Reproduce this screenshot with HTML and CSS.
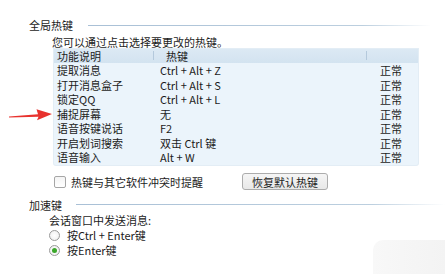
FILE: index.html
```html
<!DOCTYPE html>
<html lang="zh-CN">
<head>
  <meta charset="utf-8">
  <title>热键设置</title>
  <link rel="stylesheet" href="styles.css">
</head>
<body>

  <div class="panel">
    <div class="group-title">
      <span>全局热键</span>
      <span class="rule"></span>
    </div>
    <p class="hint">您可以通过点击选择要更改的热键。</p>

    <div class="hotkeys">
      <div class="row head">
        <span class="c1">功能说明</span>
        <span class="c2">热键</span>
        <span class="c3"></span>
      </div>
      <div class="row"><span class="c1">提取消息</span><span class="c2">Ctrl + Alt + Z</span><span class="c3">正常</span></div>
      <div class="row"><span class="c1">打开消息盒子</span><span class="c2">Ctrl + Alt + S</span><span class="c3">正常</span></div>
      <div class="row"><span class="c1">锁定QQ</span><span class="c2">Ctrl + Alt + L</span><span class="c3">正常</span></div>
      <div class="row"><span class="c1">捕捉屏幕</span><span class="c2">无</span><span class="c3">正常</span></div>
      <div class="row"><span class="c1">语音按键说话</span><span class="c2">F2</span><span class="c3">正常</span></div>
      <div class="row"><span class="c1">开启划词搜索</span><span class="c2">双击 Ctrl 键</span><span class="c3">正常</span></div>
      <div class="row"><span class="c1">语音输入</span><span class="c2">Alt + W</span><span class="c3">正常</span></div>
    </div>

    <div class="options">
      <label class="check"><span class="box"></span>热键与其它软件冲突时提醒</label>
      <button class="btn">恢复默认热键</button>
    </div>

    <div class="group-title second">
      <span>加速键</span>
      <span class="rule"></span>
    </div>
    <p class="hint small">会话窗口中发送消息:</p>
    <label class="radio"><span class="dot"></span>按Ctrl + Enter键</label>
    <label class="radio"><span class="dot on"></span>按Enter键</label>
  </div>

  <!-- red pointer over the screenshot -->
  <svg class="arrow" width="60" height="20" viewBox="0 106 60 20">
    <polygon points="9,116.4 38,114.3 36.5,109.2 52,114 37,120.2 38.5,116.8 9,117.6" fill="#e8322e"/>
  </svg>

  <div class="fade"></div>

</body>
</html>
```

FILE: styles.css
```css
body {
  margin: 0;
  background: #fff;
  font-family: "Noto Sans CJK SC", "Noto Sans", sans-serif;
  font-size: 11px;
  color: #1c1c1c;
  width: 445px;
  height: 274px;
  overflow: hidden;
}
.panel {
  padding-top: 18px;
}
.group-title {
  display: flex;
  align-items: center;
  height: 14px;
  line-height: 14px;
  margin-left: 29px;
  margin-right: 14px;
}
.group-title .rule {
  flex: 1;
  height: 1px;
  margin-left: 15px;
  background: linear-gradient(to right, #a9c0d6, #bccfdf 80%, rgba(220,230,240,0));
}
.group-title.second {
  margin-top: 8px;
  margin-right: 0;
}
.group-title.second .rule {
  margin-left: 14px;
}
.hint {
  margin: 3px 0 0 52px;
  line-height: 14px;
  height: 14px;
}
.hint.small {
  margin: 1px 0 0 49px;
}
.hotkeys {
  margin-left: 54px;
  width: 364px;
  background: #ebf4fb;
  border-radius: 0 0 2px 2px;
  box-shadow: 0 0 0 1px #e3edf5;
}
.row {
  display: grid;
  grid-template-columns: 99px 213px 52px;
  height: 14.57px;
  line-height: 14.57px;
}
.row.head {
  height: 14px;
  line-height: 14px;
  background: linear-gradient(#dce9f4, #d3e3f0);
}
.row .c1 {
  padding-left: 3px;
}
.row .c2 {
  padding-left: 7px;
}
.row .c3 {
  padding-left: 14px;
}
.row.head .c2,
.row.head .c3 {
  position: relative;
}
.row.head .c2 {
  padding-left: 13px;
}
.row.head .c2::before,
.row.head .c3::before {
  content: "";
  position: absolute;
  left: 0;
  top: 2px;
  width: 1px;
  height: 9px;
  background: #b4c9dc;
}
.options {
  display: flex;
  align-items: center;
  height: 16px;
  margin-top: 9px;
  margin-left: 54px;
}
.check {
  display: flex;
  align-items: center;
  width: 188px;
}
.box {
  width: 10px;
  height: 10px;
  border: 1px solid #a6a6a6;
  border-radius: 2px;
  background: linear-gradient(#f4f4f4, #fff);
  margin-right: 5px;
}
.btn {
  width: 86px;
  height: 17px;
  padding: 0;
  font-family: inherit;
  font-size: 11px;
  color: #1c1c1c;
  border: 1px solid #acacac;
  border-radius: 3px;
  background: linear-gradient(#f5f5f5, #e8e8e8);
}
.radio {
  display: flex;
  align-items: center;
  height: 15px;
  margin-left: 49px;
}
.radio:first-of-type {
  margin-top: 1px;
}
.dot {
  width: 11px;
  height: 11px;
  box-sizing: border-box;
  border: 1px solid #9a9a9a;
  border-radius: 50%;
  background: radial-gradient(#fff, #ececec);
  margin-right: 7px;
  position: relative;
}
.dot.on::after {
  content: "";
  position: absolute;
  left: 2px;
  top: 2px;
  width: 5px;
  height: 5px;
  border-radius: 50%;
  background: #3aa72a;
}
.arrow {
  position: absolute;
  left: 0;
  top: 106px;
}
.fade {
  position: absolute;
  left: 373px;
  top: 240px;
  width: 72px;
  height: 34px;
  border-radius: 10px 0 0 0;
  background: linear-gradient(to right, #f8f8f8, #f3f3f3);
}
```
